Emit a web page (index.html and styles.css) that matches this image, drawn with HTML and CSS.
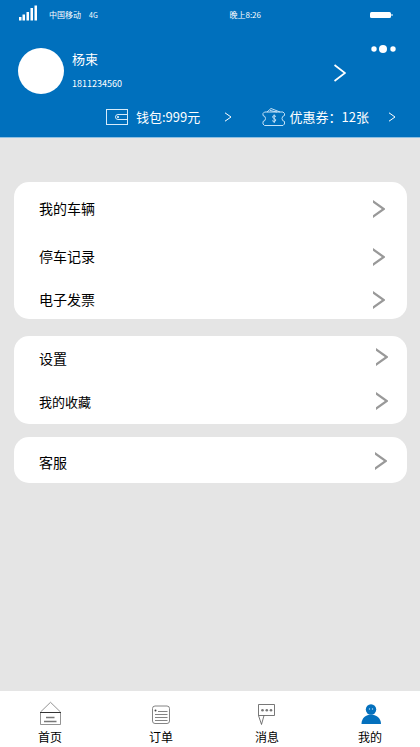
FILE: index.html
```html
<!DOCTYPE html>
<html lang="zh-CN">
<head>
<meta charset="utf-8">
<meta name="viewport" content="width=device-width, initial-scale=1">
<title>我的</title>
<link rel="stylesheet" href="styles.css">
</head>
<body>
<svg class="defs" aria-hidden="true">
  <symbol id="chevron" viewBox="0 0 12 18"><path d="M0 0L12 8.500V9.500L0 18V15.200L8.800 9L0 2.800Z" fill="currentColor"/></symbol>
  <symbol id="chevron-thin" viewBox="0 0 8 10"><path d="M1 .8L7 5L1 9.200" fill="none" stroke="currentColor"/></symbol>
</svg>
<header class="header">
  <div class="status">
    <svg class="signal" viewBox="0 0 20 16" aria-hidden="true"><path d="M1 12h2.500v3.500H1zM4.500 9.500h2.500v6H4.500zM8.500 7h2.500v8.500H8.500zM12.500 3h2.500v12.500h-2.500zM16.500 .5h2.500v15h-2.500z" fill="#fff"/></svg>
    <span class="carrier">中国移动</span>
    <span class="network">4G</span>
    <time class="clock">晚上8:26</time>
    <svg class="battery" viewBox="0 0 24 8" aria-hidden="true"><rect y="1" width="21" height="6" rx="1.500" fill="#fff"/><path d="M21.500 3h1v2h-1z" fill="#fff"/></svg>
  </div>
  <div class="profile">
    <div class="avatar"></div>
    <div class="identity">
      <h1 class="name">杨柬</h1>
      <p class="phone">1811234560</p>
    </div>
    <button class="plain open-profile" aria-label="个人资料"><svg viewBox="0 0 12 18"><path d="M.5 1L11 9L.5 17" fill="none" stroke="#fff" stroke-width="1.800"/></svg></button>
    <button class="plain more" aria-label="更多"><svg viewBox="0 0 26 10"><g fill="#fff"><circle cx="3" cy="5" r="2.700"/><circle cx="12" cy="5" r="4"/><circle cx="22" cy="5" r="2.700"/></g></svg></button>
  </div>
  <div class="assets">
    <a class="asset" href="#wallet">
      <svg class="asset-icon" viewBox="0 0 24 20" aria-hidden="true"><g fill="none" stroke="#d5ebfa"><rect x="1.500" y="2.500" width="21" height="15"/><path d="M22 7.500H13A2.500 2.500 0 0 0 13 12.500H22"/></g><circle cx="13" cy="10" r="1" fill="#fff"/></svg>
      <span>钱包:999元</span>
      <svg class="small-chevron"><use href="#chevron-thin"/></svg>
    </a>
    <a class="asset" href="#coupons">
      <svg class="asset-icon" viewBox="0 0 24 20" aria-hidden="true"><g fill="none" stroke="#c4e2f8"><path d="M2.500 5H21L22.500 6.500V8.500Q20 9 20 11.500Q20 14 22.500 14.500V17L21 18.500H2.500L1 17V14.500Q3.500 14 3.500 11.500Q3.500 9 1 8.500V6.500Z"/><path d="M5 5L9 1.500L18 5M8 3.500L15 5"/><path d="M14 9.500Q12 8 10.800 9.200Q10 10.800 12.200 11.500Q14.500 12.300 13.500 14Q12 15.200 10.200 13.700M12.200 7.500V16"/></g></svg>
      <span>优惠券：12张</span>
      <svg class="small-chevron"><use href="#chevron-thin"/></svg>
    </a>
  </div>
</header>
<main class="content">
  <nav class="card card-vehicle">
    <a class="row row-tall" href="#cars"><span>我的车辆</span><svg class="chevron"><use href="#chevron"/></svg></a>
    <a class="row row-medium" href="#records"><span>停车记录</span><svg class="chevron"><use href="#chevron"/></svg></a>
    <a class="row row-short" href="#invoices"><span>电子发票</span><svg class="chevron"><use href="#chevron"/></svg></a>
  </nav>
  <nav class="card card-personal">
    <a class="row" href="#settings"><span>设置</span><svg class="chevron"><use href="#chevron"/></svg></a>
    <a class="row row-medium" href="#favorites"><span class="compact">我的收藏</span><svg class="chevron"><use href="#chevron"/></svg></a>
  </nav>
  <nav class="card card-service">
    <a class="row" href="#service"><span>客服</span><svg class="chevron"><use href="#chevron"/></svg></a>
  </nav>
</main>
<nav class="tabs">
  <a class="tab" href="#home"><svg viewBox="0 0 24 26" aria-hidden="true"><g fill="none" stroke="#777" stroke-width=".8"><path d="M2.500 11.500V23.500H22.500V11.500M2.500 11L12.500 1.300L22.500 11"/><path d="M8 16.500H16.500M6 20.500H18.500" stroke-width="1.400"/></g><path d="M2 11.500H23" stroke="#333"/></svg><span>首页</span></a>
  <a class="tab" href="#orders"><svg viewBox="0 0 24 26" aria-hidden="true"><g fill="none" stroke="#777" stroke-width=".9"><rect x="3.500" y="5" width="17" height="17.500" rx="2.500"/><path d="M9 10.500H18.500M6 13.500H18.500M6 16.500H18.500M6 19.500H18.500"/></g><circle cx="6.500" cy="9.500" r="1" fill="#444"/></svg><span>订单</span></a>
  <a class="tab" href="#messages"><svg viewBox="0 0 24 26" aria-hidden="true"><g fill="none" stroke="#555" stroke-width=".8"><path d="M3.500 3.500H19.500V14.500H3.500ZM3.500 14.500L6.500 23.500L9 14.500"/></g><g fill="#777"><circle cx="7.500" cy="9.200" r="1.300"/><circle cx="11.800" cy="9.200" r="1.300"/><circle cx="16" cy="9.200" r="1.300"/></g></svg><span>消息</span></a>
  <a class="tab" href="#me" aria-current="page"><svg viewBox="0 0 24 26" aria-hidden="true"><g fill="#0470bd"><circle cx="13" cy="8.500" r="5.200"/><path d="M3.500 23C3.500 17 8 13.500 13 13.500S23 17 23 23Z"/></g><g fill="#b9ddf5"><circle cx="11.500" cy="8" r=".7"/><circle cx="14.500" cy="8" r=".7"/></g></svg><span>我的</span></a>
</nav>
</body>
</html>
```
FILE: styles.css
```css
* { box-sizing: border-box; }
body {
  margin: 0;
  min-height: 100vh;
  display: flex;
  flex-direction: column;
  background: #e5e5e5;
  color: #000;
  font-family: "Noto Sans CJK SC", sans-serif;
  font-size: 14px;
  line-height: 20px;
}
a { color: inherit; text-decoration: none; }
svg { display: block; flex: none; }
.defs { position: absolute; width: 0; height: 0; }
.plain { padding: 0; border: 0; background: none; cursor: pointer; }

.header {
  background: #0070bd;
  color: #fff;
  border-bottom: 1px solid #8fc0e2;
}
.status {
  display: flex;
  align-items: center;
  height: 30px;
  padding: 0 26px 0 18px;
  font-size: 8px;
}
.signal { width: 20px; height: 16px; margin: 0 11px 4px 0; }
.network { margin-left: 8px; font-size: 7px; }
.clock { margin-left: auto; }
.battery { width: 24px; height: 8px; margin-left: 109px; }
.profile { display: flex; padding: 14px 23px 0 18px; height: 70px; }
.avatar {
  width: 46px;
  height: 46px;
  margin-top: 4px;
  border-radius: 50%;
  background: #fff;
}
.identity { flex: 1; margin-left: 8px; padding-top: 5px; }
.name { margin: 0; font-size: 13px; line-height: 20px; font-weight: 400; }
.phone { margin: 5px 0 0; font-size: 9px; line-height: 20px; }
.open-profile { align-self: flex-start; margin-top: 20px; }
.open-profile svg { width: 12px; height: 18px; }
.more { align-self: flex-start; margin-left: 25px; }
.more svg { width: 26px; height: 10px; }
.assets {
  display: flex;
  justify-content: space-between;
  padding: 7px 24px 10px 105px;
  font-size: 13px;
}
.asset { display: flex; align-items: center; }
.asset-icon { width: 24px; height: 20px; margin-right: 7px; }
.asset + .asset .asset-icon { margin-right: 4px; }
.small-chevron { width: 8px; height: 10px; margin-left: 24px; }
.asset + .asset .small-chevron { margin-left: 19px; }

.content {
  flex: 1;
  display: flex;
  flex-direction: column;
  padding: 44px 13px 24px 14px;
}
.card { border-radius: 15px; background: #fff; padding-left: 25px; }
.card-vehicle { padding-top: 2px; padding-right: 22px; margin-bottom: 17px; }
.card-personal { padding-right: 19px; margin-bottom: 13px; }
.card-service { padding-top: 2px; padding-right: 20px; }
.row {
  display: flex;
  align-items: center;
  justify-content: space-between;
  height: 42px;
}
.row-tall { height: 50px; }
.row-medium { height: 46px; }
.row-short { height: 39px; }
.card-service .row { height: 44px; }
.card-vehicle span { padding-bottom: 2px; }
.card-personal span, .card-service span { padding-top: 2px; }
.compact { font-size: 13px; }
.chevron { width: 12px; height: 18px; color: #999; }

.tabs {
  display: grid;
  grid-template-columns: 111fr 106fr 103fr 24px;
  padding: 10px 38px 0;
  height: 56px;
  background: #fff;
  font-size: 12px;
}
.tab {
  width: 24px;
  display: flex;
  flex-direction: column;
  align-items: center;
}
.tab svg { width: 24px; height: 26px; }
```
